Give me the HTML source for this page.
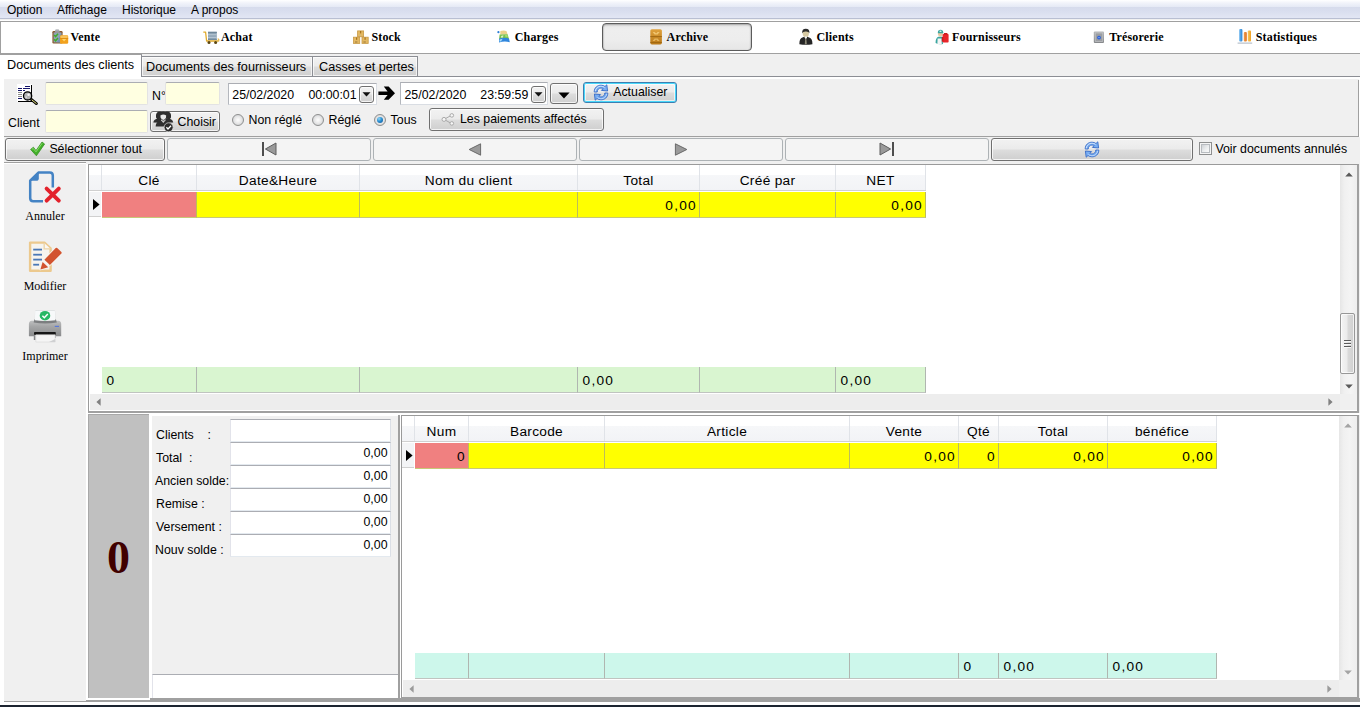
<!DOCTYPE html>
<html lang="fr">
<head>
<meta charset="utf-8">
<title>Archive - Documents des clients</title>
<style>
*{box-sizing:border-box;margin:0;padding:0}
html,body{width:1360px;height:707px;overflow:hidden;background:#fff}
body{position:relative;font-family:"Liberation Sans",Arial,sans-serif;font-size:12.5px;color:#000}
.abs,.abs-all *{position:absolute}
#app{position:absolute;left:0;top:0;width:1360px;height:707px;overflow:hidden;background:#fff}
#app div,#app span,#app svg{position:absolute}
/* menu */
#menubar{left:0;top:0;width:1360px;height:20px;background:linear-gradient(#ffffff 0px,#f1f3fa 3px,#e5e9f5 7px,#d6dbec 7px,#dadfef 12px,#e2e6f4 18px,#b9bfd2 18px,#b9bfd2 19px,#f0f0f0 19px)}
#menubar span{top:3px;font-size:12px;line-height:15px;white-space:nowrap}
/* toolbar */
#toolbar{left:0;top:21px;width:1360px;height:33px;background:#fff;border:1px solid #a0a0a0;border-right:0}
.tbt{font-family:"Liberation Serif","Times New Roman",serif;font-weight:bold;font-size:12px;line-height:14px;top:29.7px;white-space:nowrap;letter-spacing:.18px}
.tbbtn{border:1px solid #5c5c5c;border-radius:4px;background:linear-gradient(#e6e6e6 0,#eeeeee 20%,#ededed 60%,#e6e6e6 100%);box-shadow:inset 0 1px 2px rgba(0,0,0,.28),inset 1px 0 1px rgba(0,0,0,.08),inset -1px 0 1px rgba(0,0,0,.08)}
/* tabs */
.tab{font-size:12.65px;line-height:15px;white-space:nowrap}
.lbl{white-space:nowrap;font-size:12.35px;line-height:15px;margin-top:1px}
.inp{background:#ffffe1;border:1px solid #e3e3e3;border-top-color:#abadb3;border-radius:2px}
.winp{background:#fff;border:1px solid #e3e9ef;border-top-color:#abadb3;border-left-color:#e2e3ea;border-right-color:#dbdfe6}
.btn{border:1px solid #707070;border-radius:3px;background:linear-gradient(#f2f2f2 0,#ebebeb 48%,#dddddd 52%,#cfcfcf 100%);box-shadow:inset 0 0 0 1px rgba(255,255,255,.75)}
.btn.dis{border-color:#adb2b5;background:#f4f4f4;box-shadow:none}
.tabu{border:1px solid #8c8e94;background:linear-gradient(#f2f2f2 0,#ebebeb 48%,#dddddd 52%,#cfcfcf 100%);box-shadow:inset 0 0 0 1px rgba(255,255,255,.7)}
.dp{background:#fff;border:1px solid #d9dde3;border-top-color:#abadb3;border-left-color:#b4b7bd}
.btn.def{border-color:#3c7fb1;box-shadow:inset 0 0 0 1px #48d8fb,inset 0 0 0 2px rgba(255,255,255,.6)}
.radio{width:12px;height:12px;border-radius:50%;border:1px solid #8e8f8f;background:radial-gradient(circle at 50% 50%,#fdfdfd 0,#e9e9e9 45%,#c4c7ca 100%)}
.gfont{font-family:"Liberation Sans",Arial,sans-serif;font-size:13.7px;line-height:16px;white-space:nowrap;letter-spacing:.3px}
.gfont.num{letter-spacing:1.2px;margin-left:1.2px}
.side{font-family:"Liberation Serif","Times New Roman",serif;font-size:12px;line-height:13px;white-space:nowrap;text-align:center;width:82px;left:4px}
</style>
</head>
<body>
<div id="app">

<!-- MENU BAR -->
<div id="menubar">
  <span style="left:7px">Option</span>
  <span style="left:57px">Affichage</span>
  <span style="left:122px">Historique</span>
  <span style="left:191px">A propos</span>
</div>

<!-- TOOLBAR -->
<div id="toolbar"></div>
<div class="tbbtn" style="left:602px;top:23px;width:150px;height:28px"></div>
<!-- Vente -->
<svg style="left:52px;top:29px" width="17" height="16" viewBox="0 0 17 16">
  <rect x="3.2" y="0.3" width="4" height="3.2" rx="1" fill="#b9bcc0"/>
  <rect x="0.4" y="2" width="10.2" height="12.4" rx="1.2" fill="#8a5a2e"/>
  <rect x="1.6" y="3.4" width="7.8" height="10" fill="#8fa3b8"/>
  <path d="M9.4 3.4 L9.4 13.4 L5 13.4 Z" fill="#6e8bb0" opacity=".7"/>
  <rect x="3" y="1.6" width="4.6" height="2.2" rx=".6" fill="#9a9ea3"/>
  <path d="M2.2 6 L3.6 7.6 L6 4.8" stroke="#3fae2a" stroke-width="1.5" fill="none"/>
  <path d="M2.2 10.2 L3.6 11.8 L6 9" stroke="#3fae2a" stroke-width="1.5" fill="none"/>
  <rect x="8" y="6.2" width="8.2" height="8.6" rx="1.3" fill="#f2a11d"/>
  <rect x="8.4" y="6.5" width="7.4" height="2.6" rx="1" fill="#f9c45c"/>
  <path d="M10 10 L14.2 10 L12.1 12.4 Z" fill="#fbd66e"/>
  <rect x="8" y="9.1" width="8.2" height=".7" fill="#d98a12"/>
</svg>
<span class="tbt" style="left:70.4px">Vente</span>
<!-- Achat -->
<svg style="left:203px;top:31px" width="17" height="14" viewBox="0 0 17 14">
  <path d="M0.3 1.2 L2.6 1.2 L3.6 10 L15.6 10" stroke="#e0aa2c" stroke-width="1.3" fill="none" stroke-linejoin="round"/>
  <path d="M14.6 8 L15.8 8 L15.8 10.4" stroke="#e0aa2c" stroke-width="1" fill="none"/>
  <rect x="5" y="0.8" width="8.8" height="8.2" fill="#8ca2b4"/>
  <rect x="5" y="0.8" width="8.8" height="1.2" fill="#6f8799"/>
  <rect x="5" y="3.2" width="8.8" height="1.1" fill="#b9c8d4"/>
  <rect x="5" y="5.8" width="8.8" height="1.1" fill="#b9c8d4"/>
  <rect x="5" y="8.2" width="8.8" height=".8" fill="#6f8799"/>
  <circle cx="6" cy="11.6" r="1.5" fill="#5b4612"/>
  <circle cx="12.6" cy="11.6" r="1.5" fill="#5b4612"/>
</svg>
<span class="tbt" style="left:221px">Achat</span>
<!-- Stock -->
<svg style="left:353px;top:30px" width="16" height="15" viewBox="0 0 16 15">
  <g stroke="#c99a45" stroke-width=".8">
  <rect x="4.6" y="0.9" width="6" height="5.8" fill="#e3b862"/>
  <rect x="0.5" y="7.2" width="6.2" height="6.2" fill="#e3b862"/>
  <rect x="9" y="7.2" width="6.2" height="6.2" fill="#e3b862"/>
  </g>
  <rect x="7" y="1" width="1.2" height="2.4" fill="#a87420"/>
  <rect x="3" y="7.4" width="1.2" height="2.4" fill="#a87420"/>
  <rect x="11.5" y="7.4" width="1.2" height="2.4" fill="#a87420"/>
  <rect x="2" y="11.6" width="2.4" height=".8" fill="#8a6a30"/>
  <rect x="10.4" y="11.6" width="2.4" height=".8" fill="#8a6a30"/>
  <rect x="5.6" y="4.8" width="2.4" height=".8" fill="#c9b890"/>
</svg>
<span class="tbt" style="left:371.4px">Stock</span>
<!-- Charges -->
<svg style="left:497px;top:30px" width="14" height="13" viewBox="0 0 14 13">
  <path d="M3.4 1 Q7 -0.2 9.6 1.2 L10.6 4.4 L3.2 4.6 Z" fill="#ecd08a"/>
  <path d="M2.6 4.4 L10.6 4.2 L12 9 L2 9.4 Z" fill="#7cc04e"/>
  <path d="M4 6 L6.4 5.2 L6 7.4 L4.2 7.8 Z" fill="#d8f0c4"/>
  <path d="M8 5 L10.4 4.8 L10.8 7 L8.6 7.2 Z" fill="#a4dc74"/>
  <path d="M2 8.8 Q7 6.6 12 8.6 L12.8 12.2 Q7 10.8 2 12.6 Z" fill="#2f86dd"/>
  <path d="M2.6 9.6 L5.6 8.8 L4 11.4 L2.4 11.6 Z" fill="#a9dcf8"/>
  <circle cx="1.4" cy="2.2" r="1.1" fill="#2e7fd6"/>
</svg>
<span class="tbt" style="left:514.7px">Charges</span>
<!-- Archive -->
<svg style="left:650px;top:29px" width="13" height="16" viewBox="0 0 13 16">
  <defs><linearGradient id="garc" x1="0" y1="0" x2="0" y2="1"><stop offset="0" stop-color="#e0a23c"/><stop offset="1" stop-color="#b87818"/></linearGradient></defs>
  <rect x="0.3" y="0.2" width="11.6" height="15.2" rx="1.6" fill="url(#garc)"/>
  <rect x="0.3" y="7.2" width="11.6" height=".9" fill="#9c6410"/>
  <rect x="0.3" y="13.2" width="11.6" height=".8" fill="#9c6410"/>
  <path d="M2.6 3 L4.6 3 L6.1 4.6 L7.6 3 L9.6 3 L7.6 5.6 L4.6 5.6 Z" fill="#f0c670"/>
  <path d="M2.6 12 L4.6 12 L6.1 10.4 L7.6 12 L9.6 12 L7.6 9.4 L4.6 9.4 Z" fill="#e4b45c"/>
</svg>
<span class="tbt" style="left:666.6px">Archive</span>
<!-- Clients -->
<svg style="left:799px;top:28px" width="15" height="17" viewBox="0 0 15 17">
  <ellipse cx="6.8" cy="5.4" rx="3.1" ry="3.6" fill="#d6c9a2"/>
  <path d="M3.2 5.2 Q2.8 0.8 6.8 0.8 Q10.8 0.8 10.4 5.2 Q9.6 3.2 6.8 3.4 Q4 3.2 3.2 5.2 Z" fill="#2b2b2b"/>
  <path d="M0.4 16.2 Q0.2 10.4 3.4 9.4 L5.4 8.8 L6.8 11 L8.2 8.8 L10.2 9.4 Q13.6 10.4 13.4 16.2 Q7 17.4 0.4 16.2 Z" fill="#262626"/>
  <path d="M5.4 8.8 L6.8 11.4 L8.2 8.8 L7.6 8.4 L6 8.4 Z" fill="#f2f2f2"/>
  <path d="M6.3 10.6 L7.3 10.6 L7.8 15.8 L6.8 16.6 L5.8 15.8 Z" fill="#8d8a78"/>
</svg>
<span class="tbt" style="left:816.5px">Clients</span>
<!-- Fournisseurs -->
<svg style="left:935px;top:29px" width="15" height="16" viewBox="0 0 15 16">
  <ellipse cx="5.4" cy="4.8" rx="2.4" ry="2.6" fill="#e8c9a0"/>
  <path d="M2.8 4 Q2.8 0.8 5.6 0.8 Q8.2 0.8 8.2 3.4 L8.8 4.2 L2.8 4.2 Z" fill="#3aa6a0"/>
  <rect x="4.6" y="1.6" width="1.8" height="1.4" fill="#d8f0ee"/>
  <path d="M0.6 14 Q0.4 9 3.4 7.8 L7.4 7.8 L8 15 Q4 15.8 0.6 14 Z" fill="#3aa6a0"/>
  <path d="M2.6 9.4 L6.6 9.4 L6.8 15.2 Q4 15.6 2.4 15 Z" fill="#f4f4f4"/>
  <rect x="7.6" y="5" width="6" height="8.6" rx=".8" fill="#e8252a"/>
  <rect x="9" y="4" width="3.4" height="1.6" fill="#c81c20"/>
  <rect x="6.8" y="8" width="1.6" height="4.6" fill="#c81c20"/>
</svg>
<span class="tbt" style="left:952px">Fournisseurs</span>
<!-- Tresorerie -->
<svg style="left:1093px;top:31px" width="12" height="13" viewBox="0 0 12 13">
  <defs><linearGradient id="gsafe" x1="0" y1="0" x2="0" y2="1"><stop offset="0" stop-color="#b4b6b8"/><stop offset="1" stop-color="#85878a"/></linearGradient></defs>
  <rect x="0.8" y="0.6" width="10.2" height="11.4" rx="1" fill="url(#gsafe)"/>
  <rect x="2.2" y="2" width="7.6" height="8.6" fill="#9c9ea2" stroke="#c9cbce" stroke-width=".6"/>
  <circle cx="6" cy="6.6" r="1.9" fill="#2e62d8"/>
  <circle cx="6" cy="6.6" r=".7" fill="#9cc0ff"/>
</svg>
<span class="tbt" style="left:1109.2px">Trésorerie</span>
<!-- Statistiques -->
<svg style="left:1237px;top:28px" width="16" height="17" viewBox="0 0 16 17">
  <defs>
  <linearGradient id="gb1" x1="0" y1="0" x2="1" y2="0"><stop offset="0" stop-color="#6db6ee"/><stop offset="1" stop-color="#2d86d6"/></linearGradient>
  <linearGradient id="gb2" x1="0" y1="0" x2="1" y2="0"><stop offset="0" stop-color="#f0a050"/><stop offset="1" stop-color="#e07020"/></linearGradient>
  <linearGradient id="gb3" x1="0" y1="0" x2="1" y2="0"><stop offset="0" stop-color="#f8c860"/><stop offset="1" stop-color="#f0a020"/></linearGradient>
  </defs>
  <rect x="2.2" y="1" width="3.2" height="12.6" rx="1" fill="url(#gb1)"/>
  <rect x="6.8" y="4" width="3" height="9.6" rx="1" fill="url(#gb2)"/>
  <rect x="10.8" y="2.6" width="3.2" height="11" rx="1" fill="url(#gb3)"/>
  <rect x="0.6" y="14.6" width="14.6" height="1" fill="#a9b4c0"/>
</svg>
<span class="tbt" style="left:1255.7px">Statistiques</span>

<!-- TAB STRIP + PAGE -->
<div style="left:0;top:54px;width:1360px;height:23px;background:#f0f0f0"></div>
<div style="left:0;top:76px;width:1360px;height:1px;background:#8c8e94"></div>
<!-- unselected tabs -->
<div class="tabu" style="left:141px;top:56px;width:172px;height:21px"></div>
<div class="tabu" style="left:312px;top:56px;width:106px;height:21px"></div>
<span class="tab" style="left:146px;top:60.2px">Documents des fournisseurs</span>
<span class="tab" style="left:319px;top:60.2px">Casses et pertes</span>
<!-- selected tab -->
<div style="left:0px;top:54px;width:142px;height:24px;background:#fff;border-right:1px solid #8c8e94;border-top:1px solid #a0a0a0"></div>
<span class="tab" style="left:7px;top:58.2px">Documents des clients</span>
<!-- page -->
<div style="left:0;top:77px;width:1360px;height:625px;background:#fff"></div>
<div style="left:4px;top:79px;width:1356px;height:622px;background:#f0f0f0"></div>
<div style="left:4px;top:136px;width:1356px;height:1px;background:#a0a0a0"></div>
<div style="left:1358px;top:80px;width:1px;height:57px;background:#a0a0a0"></div>
<div style="left:1359px;top:77px;width:1px;height:60px;background:#fff"></div>

<!-- FILTERS -->
<!-- search icon -->
<svg style="left:16px;top:84px" width="22" height="21" viewBox="0 0 22 21">
  <rect x="1" y="0" width="15" height="18" fill="#fff"/>
  <g fill="#14146a" shape-rendering="crispEdges">
  <rect x="9" y="2" width="5" height="1"/>
  <rect x="2" y="4" width="4" height="1"/><rect x="7" y="4" width="7" height="1"/>
  <rect x="2" y="6" width="4" height="1"/><rect x="7" y="6" width="2" height="1"/>
  <rect x="2" y="14" width="4" height="1"/>
  </g>
  <g fill="#8c8c8c" shape-rendering="crispEdges"><rect x="2" y="8" width="4" height="1"/><rect x="2" y="10" width="4" height="1"/><rect x="2" y="12" width="4" height="1"/></g>
  <rect x="15" y="1" width="1" height="9" fill="#000" shape-rendering="crispEdges"/>
  <rect x="2" y="17" width="14" height="1" fill="#000" shape-rendering="crispEdges"/>
  <path d="M15 15.2 L20.4 19.6" stroke="#000" stroke-width="2.8" stroke-linecap="round"/>
  <path d="M16 16 L20.2 19.4" stroke="#eeea82" stroke-width="1" stroke-linecap="round"/>
  <circle cx="11.6" cy="11.9" r="4.1" fill="#b4b4b4" stroke="#000" stroke-width="1.3"/>
  <circle cx="12.6" cy="10.8" r="1.3" fill="#f6f6f6"/>
  <circle cx="10.2" cy="13.2" r=".9" fill="#d8d8d8"/>
</svg>
<div class="inp" style="left:45px;top:82px;width:103px;height:23px"></div>
<span class="lbl" style="left:152px;top:87.9px">N°</span>
<div class="inp" style="left:165px;top:82px;width:55px;height:23px"></div>
<!-- date 1 -->
<div class="dp" style="left:228px;top:83px;width:149px;height:22px"></div>
<span class="lbl" style="left:232.3px;top:87px">25/02/2020</span>
<span class="lbl" style="left:308.5px;top:87px">00:00:01</span>
<div class="btn" style="left:359px;top:86px;width:15px;height:17px"></div>
<svg style="left:362px;top:92px" width="9" height="5" viewBox="0 0 9 5"><path d="M0.5 0.3 L8.5 0.3 L4.5 4.6 Z" fill="#111"/></svg>
<!-- arrow -->
<svg style="left:378px;top:86px" width="18" height="15" viewBox="0 0 18 15"><path d="M0.4 5.4 L9.6 5.4 L5.8 0.6 L10.6 0.6 L17 7.2 L10.6 13.8 L5.8 13.8 L9.6 9 L0.4 9 Z" fill="#000"/></svg>
<!-- date 2 -->
<div class="dp" style="left:400px;top:82px;width:148px;height:23px"></div>
<span class="lbl" style="left:404.5px;top:87px">25/02/2020</span>
<span class="lbl" style="left:480.3px;top:87px">23:59:59</span>
<div class="btn" style="left:531px;top:86px;width:15px;height:17px"></div>
<svg style="left:534px;top:92px" width="9" height="5" viewBox="0 0 9 5"><path d="M0.5 0.3 L8.5 0.3 L4.5 4.6 Z" fill="#111"/></svg>
<div class="btn" style="left:550px;top:83px;width:28px;height:21px"></div>
<svg style="left:558px;top:92px" width="12" height="7" viewBox="0 0 12 7"><path d="M0.4 0.4 L11.6 0.4 L6 6.6 Z" fill="#000"/></svg>
<!-- Actualiser -->
<div class="btn def" style="left:583px;top:82px;width:94px;height:21px"></div>
<svg style="left:593px;top:84px" width="16" height="17" viewBox="0 0 16 17">
  <g fill="#79aef2" stroke="#356ac6" stroke-width=".9" stroke-linejoin="round">
  <path d="M1.2 8 C1.2 3.5 4.5 1.2 8 1.2 C9.6 1.2 11 1.7 12 2.5 L13.8 0.8 L14.6 7 L8.4 6.4 L10.2 4.6 C9.6 4.2 8.8 4 8 4 C5.8 4 4.2 5.6 4.2 8 Z"/>
  <path d="M14.8 9 C14.8 13.5 11.5 15.8 8 15.8 C6.4 15.8 5 15.3 4 14.5 L2.2 16.2 L1.4 10 L7.6 10.6 L5.8 12.4 C6.4 12.8 7.2 13 8 13 C10.2 13 11.8 11.4 11.8 9 Z"/>
  </g>
  <path d="M2.2 7.4 C2.6 4 5.2 2.2 8 2.2 C9.4 2.2 10.6 2.6 11.6 3.4" fill="none" stroke="#cfe3fc" stroke-width="1"/>
  <path d="M13.8 9.6 C13.4 13 10.8 14.8 8 14.8 C6.6 14.8 5.4 14.4 4.4 13.6" fill="none" stroke="#b9d5fa" stroke-width="1"/>
</svg>
<span class="lbl" style="left:613.2px;top:84.2px">Actualiser</span>
<!-- row 2 -->
<span class="lbl" style="left:8px;top:114.8px">Client</span>
<div class="inp" style="left:45px;top:110px;width:103px;height:23px"></div>
<div class="btn" style="left:150px;top:111px;width:70px;height:21px"></div>
<svg style="left:152.5px;top:111px" width="21" height="21" viewBox="0 0 21 21">
 <g fill="#2f2f2f">
  <path d="M3 6.5 Q2.4 0.6 7 0.6 Q9 0.6 9.6 2 L8 7.5 L4.4 8.5 Z"/>
  <path d="M18 6.5 Q18.6 0.6 14 0.6 Q12 0.6 11.4 2 L13 7.5 L16.6 8.5 Z"/>
  <path d="M0.3 11.4 Q1 8.2 5 7.6 L8 7.6 L8 11.8 Z"/>
  <path d="M20.2 11.4 Q19.5 8.2 15.5 7.6 L12.5 7.6 L12.5 11.8 Z"/>
  <ellipse cx="10.3" cy="5" rx="3.9" ry="4.4"/>
  <path d="M2.6 15.6 Q2.8 10.6 7.6 9.8 L13 9.8 Q17.8 10.6 18 15.6 Z"/>
 </g>
 <path d="M7.4 4.6 Q10.3 2.6 13.2 4.6 L13 6.2 Q12.4 9 10.3 9 Q8.2 9 7.6 6.2 Z" fill="#e9e9e9"/>
 <path d="M8.6 10 L10.3 12 L12 10 Z" fill="#cfcfcf"/>
 <circle cx="15.6" cy="16.3" r="4.5" fill="#2b2b2b" stroke="#e4e4e4" stroke-width=".7"/>
 <path d="M13.4 16.3 L15 18 L18 14.7" stroke="#fff" stroke-width="1.3" fill="none"/>
</svg>
<span class="lbl" style="left:177.5px;top:113.6px">Choisir</span>
<div class="radio" style="left:232px;top:114px"></div>
<span class="lbl" style="left:248.5px;top:111.7px">Non réglé</span>
<div class="radio" style="left:312px;top:114px"></div>
<span class="lbl" style="left:328.5px;top:111.7px">Réglé</span>
<div class="radio" style="left:374px;top:114px"></div>
<div style="left:377px;top:117px;width:6px;height:6px;border-radius:50%;background:radial-gradient(circle at 35% 30%,#8fd6f8 0,#2a8fd0 45%,#0c4f96 100%)"></div>
<span class="lbl" style="left:390.6px;top:111.7px">Tous</span>
<div class="btn" style="left:429px;top:108px;width:175px;height:23px"></div>
<svg style="left:441px;top:113px" width="14" height="13" viewBox="0 0 14 13">
  <g fill="#f6f6f6" stroke="#a9a9a9" stroke-width="1">
  <path d="M3 6.4 L10.6 2.2 M3 6.4 L10.6 10.6" fill="none"/>
  <circle cx="3" cy="6.4" r="2"/><circle cx="10.8" cy="2.4" r="1.8"/><circle cx="10.8" cy="10.4" r="1.8"/>
  </g>
</svg>
<span class="lbl" style="left:460px;top:111px">Les paiements affectés</span>

<!-- NAV ROW -->
<div class="btn" style="left:5px;top:138px;width:160px;height:23px"></div>
<svg style="left:30px;top:141px" width="15" height="16" viewBox="0 0 15 16">
  <path d="M0.6 8.4 L3.4 6.2 L6 9.6 L12 1 L14.6 3 L6.4 14.8 Z" fill="#43b02a" stroke="#2e8a1c" stroke-width=".7" stroke-linejoin="round"/>
  <path d="M1.8 8.4 L3.2 7.4 L6 10.8 L12.2 2.2" stroke="#8fe070" stroke-width=".9" fill="none"/>
</svg>
<span class="lbl" style="left:49.4px;top:140.7px">Sélectionner tout</span>
<div class="btn dis" style="left:167px;top:138px;width:204px;height:23px"></div>
<div class="btn dis" style="left:373px;top:138px;width:204px;height:23px"></div>
<div class="btn dis" style="left:579px;top:138px;width:204px;height:23px"></div>
<div class="btn dis" style="left:785px;top:138px;width:204px;height:23px"></div>
<svg style="left:262px;top:142px" width="15" height="14" viewBox="0 0 15 14"><rect x="0" y="0" width="2" height="14" fill="#4e4e4e"/><path d="M14 1 L14 13 L3.4 7 Z" fill="#9a9a9a" stroke="#5e5e5e" stroke-width="1"/></svg>
<svg style="left:468px;top:143px" width="14" height="13" viewBox="0 0 14 13"><path d="M12.6 0.8 L12.6 12.2 L1.2 6.5 Z" fill="#9a9a9a" stroke="#6a6a6a" stroke-width="1"/></svg>
<svg style="left:674px;top:143px" width="14" height="13" viewBox="0 0 14 13"><path d="M1.4 0.8 L1.4 12.2 L12.8 6.5 Z" fill="#9a9a9a" stroke="#6a6a6a" stroke-width="1"/></svg>
<svg style="left:879px;top:142px" width="15" height="14" viewBox="0 0 15 14"><rect x="13" y="0" width="2" height="14" fill="#4e4e4e"/><path d="M1 1 L1 13 L11.6 7 Z" fill="#9a9a9a" stroke="#5e5e5e" stroke-width="1"/></svg>
<div class="btn" style="left:991px;top:138px;width:202px;height:23px"></div>
<svg style="left:1084px;top:141px" width="16" height="17" viewBox="0 0 16 17">
  <g fill="#79aef2" stroke="#356ac6" stroke-width=".9" stroke-linejoin="round">
  <path d="M1.2 8 C1.2 3.5 4.5 1.2 8 1.2 C9.6 1.2 11 1.7 12 2.5 L13.8 0.8 L14.6 7 L8.4 6.4 L10.2 4.6 C9.6 4.2 8.8 4 8 4 C5.8 4 4.2 5.6 4.2 8 Z"/>
  <path d="M14.8 9 C14.8 13.5 11.5 15.8 8 15.8 C6.4 15.8 5 15.3 4 14.5 L2.2 16.2 L1.4 10 L7.6 10.6 L5.8 12.4 C6.4 12.8 7.2 13 8 13 C10.2 13 11.8 11.4 11.8 9 Z"/>
  </g>
  <path d="M2.2 7.4 C2.6 4 5.2 2.2 8 2.2 C9.4 2.2 10.6 2.6 11.6 3.4" fill="none" stroke="#cfe3fc" stroke-width="1"/>
  <path d="M13.8 9.6 C13.4 13 10.8 14.8 8 14.8 C6.6 14.8 5.4 14.4 4.4 13.6" fill="none" stroke="#b9d5fa" stroke-width="1"/>
</svg>
<div style="left:1199px;top:142px;width:13px;height:13px;border:1px solid #8e8f8f;background:#f4f4f4"></div>
<div style="left:1201px;top:144px;width:9px;height:9px;border:1px solid #b8bcc0;background:linear-gradient(135deg,#cfd2d6 0,#eceeef 55%,#fafafa 100%)"></div>
<span class="lbl" style="left:1215.4px;top:140.9px">Voir documents annulés</span>

<!-- SIDEBAR -->
<div style="left:86px;top:164px;width:3px;height:538px;background:#fff"></div>
<div style="left:4px;top:162px;width:82px;height:1px;background:#a0a0a0"></div>
<div style="left:4px;top:163px;width:82px;height:1px;background:#fff"></div>
<!-- Annuler -->
<svg style="left:28px;top:170px" width="35" height="34" viewBox="0 0 35 34">
  <path d="M24.8 17.6 L24.8 5.6 Q24.8 2.6 21.8 2.6 L10.4 2.6 L2.2 10.6 L2.2 28.2 Q2.2 31.2 5.2 31.2 L15 31.2" fill="none" stroke="#4483c4" stroke-width="2.5" stroke-linejoin="round"/>
  <path d="M2 10.8 L10.8 2.2 L10.8 8.2 Q10.8 10.8 8.2 10.8 Z" fill="#4483c4"/>
  <path d="M18.6 18.6 L30.8 30.6 M30.8 18.6 L18.6 30.6" stroke="#e3222b" stroke-width="3.9" stroke-linecap="round"/>
</svg>
<span class="side" style="top:209.7px">Annuler</span>
<!-- Modifier -->
<svg style="left:28px;top:241px" width="35" height="33" viewBox="0 0 35 33">
  <path d="M2.1 1.6 L16.4 1.6 L22.6 7.4 L22.6 29.7 L2.1 29.7 Z" fill="#f6f4ef" stroke="#ecc98e" stroke-width="2.4" stroke-linejoin="round"/>
  <path d="M16.2 2 L16.2 7.8 L22.4 7.8" fill="#faf8f4" stroke="#ecd4a6" stroke-width="1.3"/>
  <g fill="#4a78b6"><rect x="5.2" y="7.7" width="8.8" height="1.8"/><rect x="5.2" y="12.8" width="8.8" height="1.8"/><rect x="5.2" y="17.7" width="8.8" height="1.8"/><rect x="5.2" y="22.8" width="5.9" height="1.8"/></g>
  <path d="M16.4 18.8 L27.7 7 L33.4 12.3 L21.9 23.9 Z M12.4 28.4 L14.4 20.8 L20.4 26.2 Z" fill="#f6f4ef" stroke="#f6f4ef" stroke-width="1.8" stroke-linejoin="round"/>
  <path d="M16.4 18.8 L27.7 7 Q28.4 6.4 29.2 7 L33.4 11 Q34 11.8 33.4 12.5 L21.9 23.9 Z" fill="#d2532f"/>
  <path d="M12.4 28.4 L14.6 21 L20.2 26.2 Z" fill="#d2532f"/>
</svg>
<span class="side" style="top:279.7px">Modifier</span>
<!-- Imprimer -->
<svg style="left:28px;top:309px" width="35" height="36" viewBox="0 0 35 36">
  <defs><linearGradient id="gpr" x1="0" y1="0" x2="0" y2="1"><stop offset="0" stop-color="#c4c5c6"/><stop offset=".35" stop-color="#a4a5a6"/><stop offset="1" stop-color="#7e8082"/></linearGradient></defs>
  <path d="M7.6 1.8 L26.6 1.8 L27.2 13 L7 13 Z" fill="#f7f9fa" stroke="#cfd3d6" stroke-width=".7"/>
  <ellipse cx="17" cy="6.7" rx="5.3" ry="4.8" fill="#27b765"/>
  <path d="M14.4 6.8 L16.3 8.7 L19.8 4.9" stroke="#fff" stroke-width="1.5" fill="none"/>
  <path d="M3.8 11.8 L6.4 11.8 L6.4 10.4 L28 10.4 L28 11.8 L30.4 11.8 Q33.2 12 33.2 15 L33.2 27.2 L27.6 27.2 L27.6 29 L26.8 29 L26.8 25.8 L7.6 25.8 L7.6 31 L5.8 31 L5.8 27.2 L0.9 27.2 L0.9 15 Q0.9 12 3.8 11.8 Z" fill="url(#gpr)"/>
  <path d="M6.4 10.6 L28 10.6 L28.8 13.6 Q17 15.6 5.6 13.6 Z" fill="#7c7e80"/>
  <path d="M7.2 2 L26.9 2 L27.3 11.2 Q17 12.6 6.9 11.2 Z" fill="#f7f9fa"/>
  <ellipse cx="17" cy="6.7" rx="5.3" ry="4.8" fill="#27b765"/>
  <path d="M14.4 6.8 L16.3 8.7 L19.8 4.9" stroke="#fff" stroke-width="1.5" fill="none"/>
  <rect x="26.8" y="16.8" width="4.2" height="1.2" fill="#5a78d8"/>
  <rect x="6" y="23" width="21.8" height="2.9" rx=".8" fill="#161616"/>
  <path d="M7.8 25.8 L27 25.8 L27.2 33 L7.8 33 Z" fill="#f5f5f5" stroke="#d6d6d6" stroke-width=".6"/>
  <path d="M21 33 L27.2 33 L27.2 30 Z" fill="#cfd0d2"/>
</svg>
<span class="side" style="top:350px">Imprimer</span>

<!-- GRID 1 -->
<div style="left:88px;top:164px;width:1271px;height:249px;background:#fff;border:1px solid #9a9a9a;border-right:2px solid #a0a0a0;border-bottom:2px solid #a0a0a0"></div>
<div style="left:89px;top:165px;width:837px;height:26px;background:linear-gradient(#ffffff 0,#ffffff 38%,#f6f7f9 40%,#f2f3f6 100%);border-bottom:1px solid #d0d0d0"></div>
<div style="left:101px;top:165px;width:1px;height:25px;background:#e0e3e8"></div>
<div style="left:196px;top:165px;width:1px;height:25px;background:#e0e3e8"></div>
<div style="left:359px;top:165px;width:1px;height:25px;background:#e0e3e8"></div>
<div style="left:577px;top:165px;width:1px;height:25px;background:#e0e3e8"></div>
<div style="left:699px;top:165px;width:1px;height:25px;background:#e0e3e8"></div>
<div style="left:835px;top:165px;width:1px;height:25px;background:#e0e3e8"></div>
<div style="left:925px;top:165px;width:1px;height:25px;background:#e0e3e8"></div>
<span class="gfont" style="left:102px;width:94px;top:172.9px;text-align:center">Clé</span>
<span class="gfont" style="left:197px;width:162px;top:172.9px;text-align:center">Date&amp;Heure</span>
<span class="gfont" style="left:360px;width:217px;top:172.9px;text-align:center">Nom du client</span>
<span class="gfont" style="left:578px;width:121px;top:172.9px;text-align:center">Total</span>
<span class="gfont" style="left:700px;width:135px;top:172.9px;text-align:center">Créé par</span>
<span class="gfont" style="left:836px;width:89px;top:172.9px;text-align:center">NET</span>
<div style="left:89px;top:192px;width:12px;height:25px;background:#f3f4f6;border-bottom:1px solid #d0d0d0"></div>
<svg style="left:93px;top:199.0px" width="7" height="11" viewBox="0 0 7 11"><path d="M0 0 L6.6 5.5 L0 11 Z" fill="#000"/></svg>
<div style="left:102px;top:192px;width:95px;height:26px;background:#f08080;border-right:1px solid #bcbc5c;border-bottom:1px solid #c8c878"></div>
<div style="left:197px;top:192px;width:163px;height:26px;background:#ffff00;border-right:1px solid #bcbc5c;border-bottom:1px solid #c8c878"></div>
<div style="left:360px;top:192px;width:218px;height:26px;background:#ffff00;border-right:1px solid #bcbc5c;border-bottom:1px solid #c8c878"></div>
<div style="left:578px;top:192px;width:122px;height:26px;background:#ffff00;border-right:1px solid #bcbc5c;border-bottom:1px solid #c8c878"></div>
<span class="gfont num" style="left:578px;width:117.6px;top:197.6px;text-align:right">0,00</span>
<div style="left:700px;top:192px;width:136px;height:26px;background:#ffff00;border-right:1px solid #bcbc5c;border-bottom:1px solid #c8c878"></div>
<div style="left:836px;top:192px;width:90px;height:26px;background:#ffff00;border-right:1px solid #bcbc5c;border-bottom:1px solid #c8c878"></div>
<span class="gfont num" style="left:836px;width:85.6px;top:197.6px;text-align:right">0,00</span>
<div style="left:102px;top:367px;width:95px;height:26px;background:#d9f5d0;border-right:1px solid #b0b6b0;border-bottom:1px solid #c0c4c0"></div>
<span class="gfont num" style="left:105.4px;top:372.7px">0</span>
<div style="left:197px;top:367px;width:163px;height:26px;background:#d9f5d0;border-right:1px solid #b0b6b0;border-bottom:1px solid #c0c4c0"></div>
<div style="left:360px;top:367px;width:218px;height:26px;background:#d9f5d0;border-right:1px solid #b0b6b0;border-bottom:1px solid #c0c4c0"></div>
<div style="left:578px;top:367px;width:122px;height:26px;background:#d9f5d0;border-right:1px solid #b0b6b0;border-bottom:1px solid #c0c4c0"></div>
<span class="gfont num" style="left:581.4px;top:372.7px">0,00</span>
<div style="left:700px;top:367px;width:136px;height:26px;background:#d9f5d0;border-right:1px solid #b0b6b0;border-bottom:1px solid #c0c4c0"></div>
<div style="left:836px;top:367px;width:90px;height:26px;background:#d9f5d0;border-right:1px solid #b0b6b0;border-bottom:1px solid #c0c4c0"></div>
<span class="gfont num" style="left:839.4px;top:372.7px">0,00</span>
<div style="left:90px;top:394px;width:1250px;height:16px;background:#ededed"></div>
<div style="left:1340px;top:394px;width:17px;height:16px;background:#f0f0f0"></div>
<svg style="left:96px;top:398.0px" width="5" height="8" viewBox="0 0 5 8"><path d="M4.6 0.2 L4.6 7.8 L0.4 4 Z" fill="#808080"/></svg>
<svg style="left:1328px;top:398.0px" width="5" height="8" viewBox="0 0 5 8"><path d="M0.4 0.2 L0.4 7.8 L4.6 4 Z" fill="#808080"/></svg>
<div style="left:1340px;top:165px;width:17px;height:229px;background:linear-gradient(90deg,#e6e6e6 0,#f0f0f0 25%,#f4f4f4 60%,#eeeeee 100%)"></div>
<svg style="left:1344.5px;top:172px" width="8" height="5" viewBox="0 0 8 5"><path d="M0.2 4.6 L7.8 4.6 L4 0.4 Z" fill="#5a5a5a"/></svg>
<svg style="left:1344.5px;top:384px" width="8" height="5" viewBox="0 0 8 5"><path d="M0.2 0.4 L7.8 0.4 L4 4.6 Z" fill="#5a5a5a"/></svg>
<div style="left:1340px;top:313px;width:15px;height:61px;border:1px solid #979797;border-radius:2px;background:linear-gradient(90deg,#f4f4f4 0,#ebebeb 45%,#d9d9d9 55%,#cfcfcf 100%);box-shadow:inset 0 0 0 1px rgba(255,255,255,.7)"></div>
<div style="left:1343.5px;top:340.0px;width:7px;height:1px;background:#5c5c5c;box-shadow:0 1px 0 #f8f8f8"></div>
<div style="left:1343.5px;top:343.0px;width:7px;height:1px;background:#5c5c5c;box-shadow:0 1px 0 #f8f8f8"></div>
<div style="left:1343.5px;top:346.0px;width:7px;height:1px;background:#5c5c5c;box-shadow:0 1px 0 #f8f8f8"></div>

<!-- BOTTOM LEFT -->
<div style="left:88px;top:413px;width:1272px;height:2px;background:#fff"></div>
<div style="left:88px;top:414px;width:61px;height:284px;background:#c0c0c0;border-left:1px solid #a8a8a8;border-top:1px solid #a8a8a8"></div>
<div style="left:149px;top:414px;width:3px;height:284px;background:#fff"></div>
<div style="left:152px;top:416px;width:246px;height:282px;background:#f0f0f0"></div>
<div style="left:152px;top:414px;width:249px;height:2px;background:#fff"></div>
<div style="left:398px;top:415px;width:2px;height:283px;background:#a0a0a0"></div>
<div style="left:400px;top:415px;width:1px;height:283px;background:#fff"></div>
<span style="left:88px;width:61px;top:531.5px;text-align:center;font-family:'Liberation Serif','Times New Roman',serif;font-weight:bold;font-size:46px;line-height:52px;color:#400000">0</span>
<span class="lbl" style="left:156px;top:426.9px">Clients&nbsp;&nbsp;&nbsp; :</span>
<span class="lbl" style="left:156px;top:449.9px">Total&nbsp; :</span>
<span class="lbl" style="left:155px;top:472.9px">Ancien solde:</span>
<span class="lbl" style="left:156px;top:495.9px">Remise :</span>
<span class="lbl" style="left:156px;top:518.9px">Versement :</span>
<span class="lbl" style="left:155px;top:541.9px">Nouv solde :</span>
<div class="winp" style="left:230px;top:419px;width:161px;height:23px"></div>
<div class="winp" style="left:230px;top:442px;width:161px;height:23px"></div>
<div class="winp" style="left:230px;top:465px;width:161px;height:23px"></div>
<div class="winp" style="left:230px;top:488px;width:161px;height:23px"></div>
<div class="winp" style="left:230px;top:511px;width:161px;height:23px"></div>
<div class="winp" style="left:230px;top:534px;width:161px;height:23px"></div>
<span class="lbl" style="left:330px;width:57.5px;text-align:right;top:444.9px">0,00</span>
<span class="lbl" style="left:330px;width:57.5px;text-align:right;top:467.9px">0,00</span>
<span class="lbl" style="left:330px;width:57.5px;text-align:right;top:490.9px">0,00</span>
<span class="lbl" style="left:330px;width:57.5px;text-align:right;top:513.9px">0,00</span>
<span class="lbl" style="left:330px;width:57.5px;text-align:right;top:536.9px">0,00</span>
<div style="left:152px;top:674px;width:246px;height:24px;background:#fff;border-top:1px solid #abadb3;border-left:1px solid #e2e3ea"></div>

<!-- GRID 2 -->
<div style="left:401px;top:415px;width:958px;height:284px;background:#fff;border:1px solid #9a9a9a;border-right:2px solid #a0a0a0;border-bottom:2px solid #a0a0a0"></div>
<div style="left:402px;top:416px;width:815px;height:26px;background:linear-gradient(#ffffff 0,#ffffff 38%,#f6f7f9 40%,#f2f3f6 100%);border-bottom:1px solid #d0d0d0"></div>
<div style="left:414px;top:416px;width:1px;height:25px;background:#e0e3e8"></div>
<div style="left:468px;top:416px;width:1px;height:25px;background:#e0e3e8"></div>
<div style="left:604px;top:416px;width:1px;height:25px;background:#e0e3e8"></div>
<div style="left:849px;top:416px;width:1px;height:25px;background:#e0e3e8"></div>
<div style="left:958px;top:416px;width:1px;height:25px;background:#e0e3e8"></div>
<div style="left:998px;top:416px;width:1px;height:25px;background:#e0e3e8"></div>
<div style="left:1107px;top:416px;width:1px;height:25px;background:#e0e3e8"></div>
<div style="left:1216px;top:416px;width:1px;height:25px;background:#e0e3e8"></div>
<span class="gfont" style="left:415px;width:53px;top:423.9px;text-align:center">Num</span>
<span class="gfont" style="left:469px;width:135px;top:423.9px;text-align:center">Barcode</span>
<span class="gfont" style="left:605px;width:244px;top:423.9px;text-align:center">Article</span>
<span class="gfont" style="left:850px;width:108px;top:423.9px;text-align:center">Vente</span>
<span class="gfont" style="left:959px;width:39px;top:423.9px;text-align:center">Qté</span>
<span class="gfont" style="left:999px;width:108px;top:423.9px;text-align:center">Total</span>
<span class="gfont" style="left:1108px;width:108px;top:423.9px;text-align:center">bénéfice</span>
<div style="left:402px;top:443px;width:12px;height:25px;background:#f3f4f6;border-bottom:1px solid #d0d0d0"></div>
<svg style="left:406px;top:450.0px" width="7" height="11" viewBox="0 0 7 11"><path d="M0 0 L6.6 5.5 L0 11 Z" fill="#000"/></svg>
<div style="left:415px;top:443px;width:54px;height:26px;background:#f08080;border-right:1px solid #bcbc5c;border-bottom:1px solid #c8c878"></div>
<span class="gfont num" style="left:415px;width:49.6px;top:448.6px;text-align:right">0</span>
<div style="left:469px;top:443px;width:136px;height:26px;background:#ffff00;border-right:1px solid #bcbc5c;border-bottom:1px solid #c8c878"></div>
<div style="left:605px;top:443px;width:245px;height:26px;background:#ffff00;border-right:1px solid #bcbc5c;border-bottom:1px solid #c8c878"></div>
<div style="left:850px;top:443px;width:109px;height:26px;background:#ffff00;border-right:1px solid #bcbc5c;border-bottom:1px solid #c8c878"></div>
<span class="gfont num" style="left:850px;width:104.6px;top:448.6px;text-align:right">0,00</span>
<div style="left:959px;top:443px;width:40px;height:26px;background:#ffff00;border-right:1px solid #bcbc5c;border-bottom:1px solid #c8c878"></div>
<span class="gfont num" style="left:959px;width:35.6px;top:448.6px;text-align:right">0</span>
<div style="left:999px;top:443px;width:109px;height:26px;background:#ffff00;border-right:1px solid #bcbc5c;border-bottom:1px solid #c8c878"></div>
<span class="gfont num" style="left:999px;width:104.6px;top:448.6px;text-align:right">0,00</span>
<div style="left:1108px;top:443px;width:109px;height:26px;background:#ffff00;border-right:1px solid #bcbc5c;border-bottom:1px solid #c8c878"></div>
<span class="gfont num" style="left:1108px;width:104.6px;top:448.6px;text-align:right">0,00</span>
<div style="left:415px;top:653px;width:54px;height:26px;background:#cdf7eb;border-right:1px solid #b0b6b0;border-bottom:1px solid #c0c4c0"></div>
<div style="left:469px;top:653px;width:136px;height:26px;background:#cdf7eb;border-right:1px solid #b0b6b0;border-bottom:1px solid #c0c4c0"></div>
<div style="left:605px;top:653px;width:245px;height:26px;background:#cdf7eb;border-right:1px solid #b0b6b0;border-bottom:1px solid #c0c4c0"></div>
<div style="left:850px;top:653px;width:109px;height:26px;background:#cdf7eb;border-right:1px solid #b0b6b0;border-bottom:1px solid #c0c4c0"></div>
<div style="left:959px;top:653px;width:40px;height:26px;background:#cdf7eb;border-right:1px solid #b0b6b0;border-bottom:1px solid #c0c4c0"></div>
<span class="gfont num" style="left:962.4px;top:658.7px">0</span>
<div style="left:999px;top:653px;width:109px;height:26px;background:#cdf7eb;border-right:1px solid #b0b6b0;border-bottom:1px solid #c0c4c0"></div>
<span class="gfont num" style="left:1002.4px;top:658.7px">0,00</span>
<div style="left:1108px;top:653px;width:109px;height:26px;background:#cdf7eb;border-right:1px solid #b0b6b0;border-bottom:1px solid #c0c4c0"></div>
<span class="gfont num" style="left:1111.4px;top:658.7px">0,00</span>
<div style="left:403px;top:680px;width:936px;height:17px;background:#ededed"></div>
<div style="left:1339px;top:680px;width:18px;height:17px;background:#f0f0f0"></div>
<svg style="left:409px;top:684.5px" width="5" height="8" viewBox="0 0 5 8"><path d="M4.6 0.2 L4.6 7.8 L0.4 4 Z" fill="#9a9a9a"/></svg>
<svg style="left:1327px;top:684.5px" width="5" height="8" viewBox="0 0 5 8"><path d="M0.4 0.2 L0.4 7.8 L4.6 4 Z" fill="#9a9a9a"/></svg>
<div style="left:1339px;top:416px;width:18px;height:264px;background:linear-gradient(90deg,#e6e6e6 0,#f0f0f0 25%,#f4f4f4 60%,#eeeeee 100%)"></div>
<svg style="left:1344.0px;top:423px" width="8" height="5" viewBox="0 0 8 5"><path d="M0.2 4.6 L7.8 4.6 L4 0.4 Z" fill="#a4a4a4"/></svg>
<svg style="left:1344.0px;top:670px" width="8" height="5" viewBox="0 0 8 5"><path d="M0.2 0.4 L7.8 0.4 L4 4.6 Z" fill="#a4a4a4"/></svg>

<!-- BOTTOM EDGE -->
<div style="left:0;top:698px;width:1360px;height:4px;background:#fff"></div>
<div style="left:4px;top:698px;width:82px;height:3px;background:#f0f0f0"></div>
<div style="left:150px;top:698px;width:1210px;height:4px;background:#a0a0a0"></div>
<div style="left:86px;top:700px;width:64px;height:2px;background:#a0a0a0"></div>
<div style="left:4px;top:701px;width:82px;height:1px;background:#a0a0a0"></div>
<div style="left:0;top:702px;width:1360px;height:3px;background:#fff"></div>
<div style="left:0;top:705px;width:1360px;height:2px;background:#1c2430"></div>
</div>
</body>
</html>
